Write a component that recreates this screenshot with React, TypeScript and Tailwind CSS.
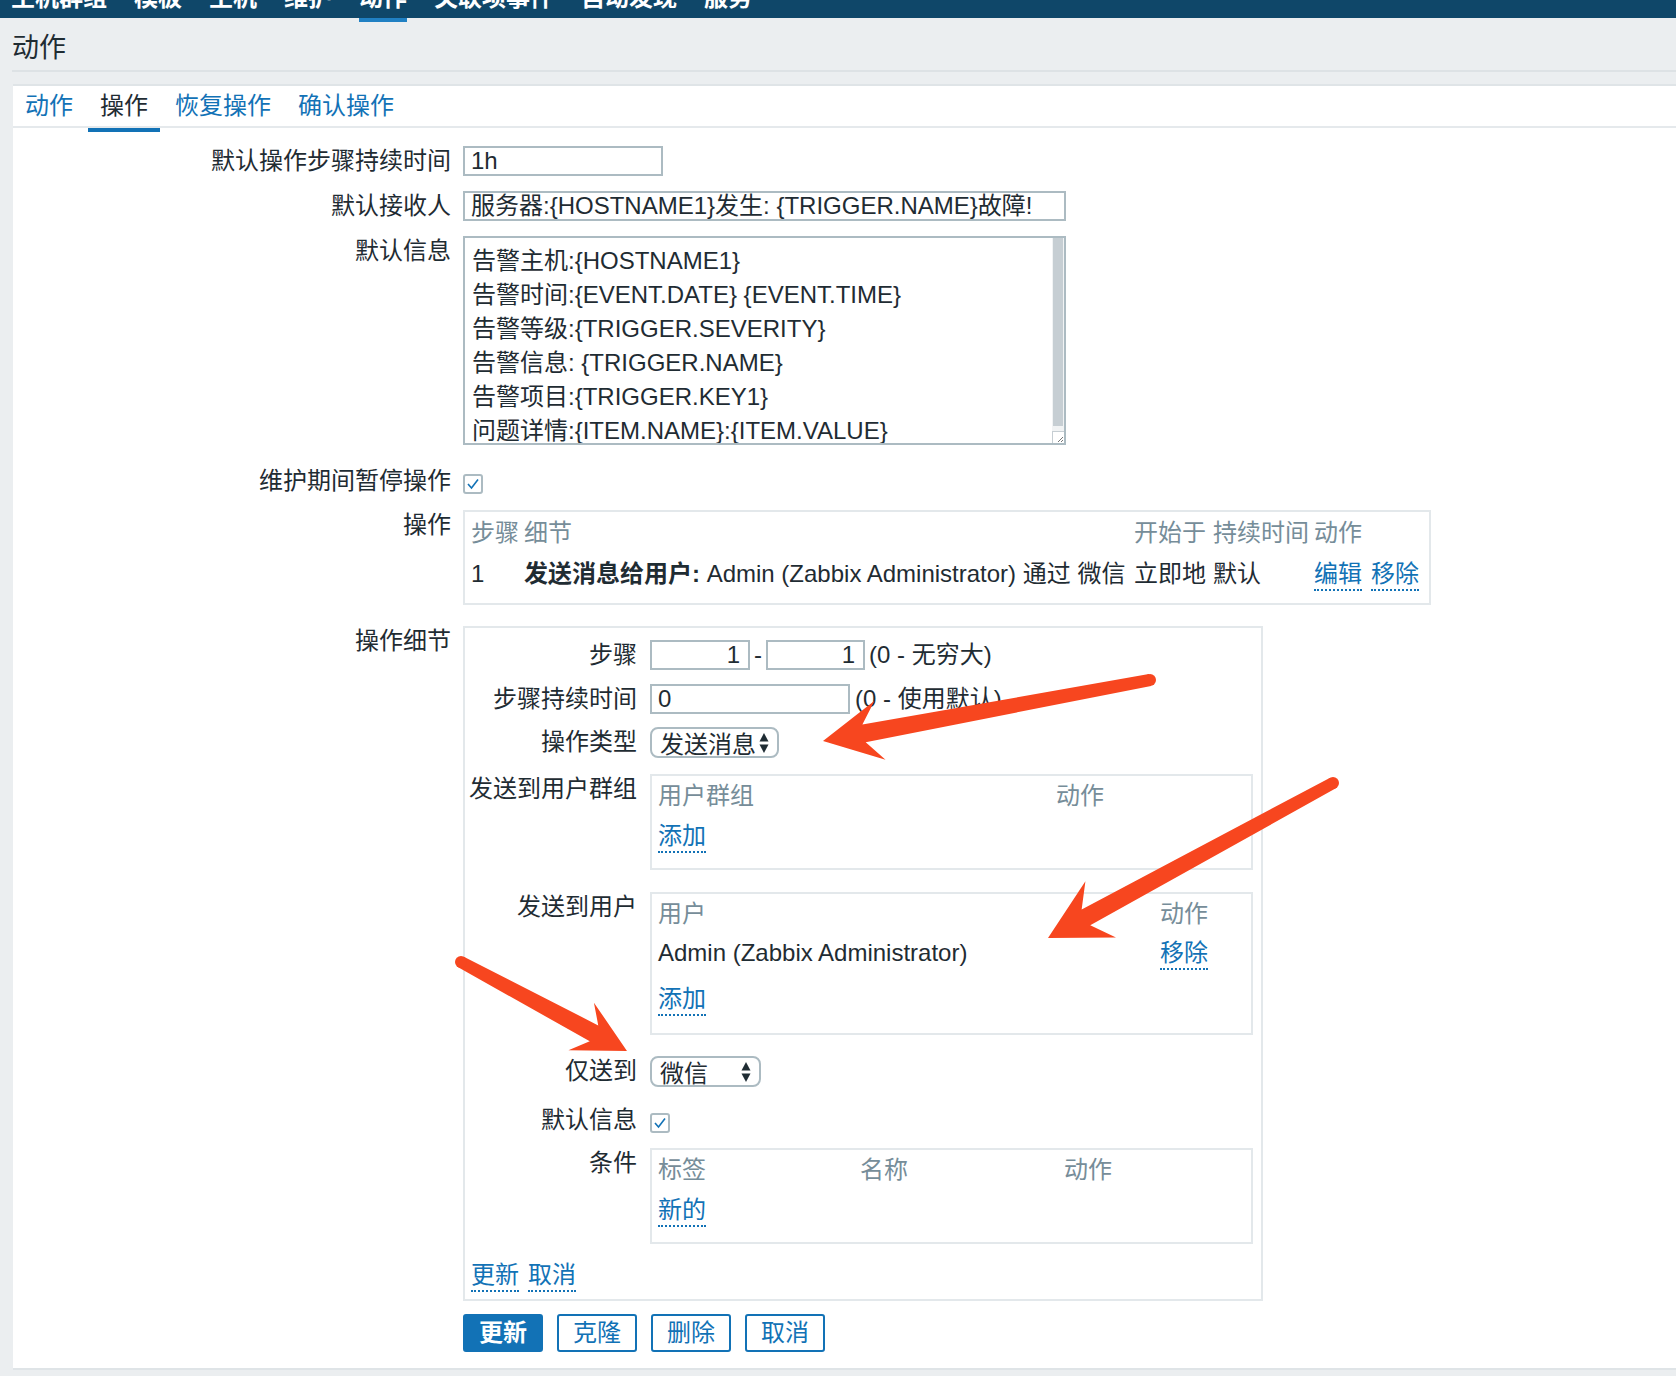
import React from 'react';

const LINK = 'inline-block leading-[30px] text-[#1272b6] border-b-2 border-dotted border-[#1272b6]';
const HEAD = 'text-[#768d99]';

function Arrow({ t, p, head, half }: { t: [number, number]; p: [number, number]; head: number; half: number }) {
  const dx = p[0] - t[0];
  const dy = p[1] - t[1];
  const len = Math.sqrt(dx * dx + dy * dy);
  const ux = dx / len;
  const uy = dy / len;
  const nx = -uy;
  const ny = ux;
  const tailW = 6;
  const neckW = 9;
  const bx = p[0] - ux * head;
  const by = p[1] - uy * head;
  const kx = p[0] - ux * head * 0.72;
  const ky = p[1] - uy * head * 0.72;
  const pts = [
    [t[0] + nx * tailW, t[1] + ny * tailW],
    [kx + nx * neckW, ky + ny * neckW],
    [bx + nx * half, by + ny * half],
    [p[0], p[1]],
    [bx - nx * half, by - ny * half],
    [kx - nx * neckW, ky - ny * neckW],
    [t[0] - nx * tailW, t[1] - ny * tailW],
  ]
    .map((q) => q.join(','))
    .join(' ');
  return (
    <g fill="#f7461f">
      <polygon points={pts} />
      <circle cx={t[0]} cy={t[1]} r={tailW} />
    </g>
  );
}

function Checkbox() {
  return (
    <div className="w-[20px] h-[20px] border-2 border-[#acbbc2] rounded-[3px] bg-white flex items-center justify-center">
      <svg width="14" height="12" viewBox="0 0 14 12">
        <polyline points="2,6 5.5,10 12,1.5" fill="none" stroke="#1272b6" strokeWidth="1.6" />
      </svg>
    </div>
  );
}

function UpDown() {
  return (
    <svg width="10" height="22" viewBox="0 0 10 22">
      <polygon points="5,1 9.5,9.5 0.5,9.5" fill="#1f2c33" />
      <polygon points="0.5,12.5 9.5,12.5 5,21" fill="#1f2c33" />
    </svg>
  );
}

function Select({ value, w }: { value: string; w: string }) {
  return (
    <div className={cn('h-[31px] border-2 border-[#acbbc2] rounded-[8px] bg-white flex items-center justify-between pl-[8px] pr-[8px]', w)}>
      <span className="leading-[27px] pt-[4px]">{value}</span>
      <UpDown />
    </div>
  );
}

function Box({ className, children }: { className?: string; children: React.ReactNode }) {
  return <div className={cn('border-2 border-[#e3e8eb] bg-white', className)}>{children}</div>;
}

export default function App() {
  const nav = ['主机群组', '模板', '主机', '维护', '动作', '关联项事件', '自动发现', '服务'];
  const msg = [
    '告警主机:{HOSTNAME1}',
    '告警时间:{EVENT.DATE} {EVENT.TIME}',
    '告警等级:{TRIGGER.SEVERITY}',
    '告警信息: {TRIGGER.NAME}',
    '告警项目:{TRIGGER.KEY1}',
    '问题详情:{ITEM.NAME}:{ITEM.VALUE}',
  ];

  return (
    <div className="relative w-[1676px] h-[1376px] overflow-hidden bg-[#ebeef0] text-[24px] leading-[30px] text-[#1f2c33] font-['Liberation_Sans','Noto_Sans_CJK_SC',sans-serif]">
      {/* top nav, mostly scrolled off */}
      <div className="h-[18px] bg-[#0f4769] flex gap-[27px] pl-[11px]">
        {nav.map((n) => (
          <div key={n} className="relative h-[18px]">
            <div className="-mt-[14px] leading-[24px] font-bold text-white whitespace-nowrap">{n}</div>
            {n === '动作' && <div className="absolute left-0 right-0 top-full h-[4px] bg-[#2080c3]" />}
          </div>
        ))}
      </div>

      {/* page title */}
      <div className="h-[52px] pl-[12px]">
        <h1 className="pt-[17px] leading-[26px] text-[27px]">动作</h1>
      </div>
      <div className="ml-[12px] h-[2px] bg-[#dde2e5]" />

      {/* form panel */}
      <div className="mt-[12px] ml-[13px] bg-white border-t-2 border-b-2 border-[#dfe4e7] pb-[16px]">
        {/* tabs */}
        <div className="h-[42px] border-b-2 border-[#e5e9ec] flex items-start gap-[3px]">
          {['动作', '操作', '恢复操作', '确认操作'].map((t) => (
            <div
              key={t}
              className={cn(
                'h-[46px] px-[12px] leading-[40px] border-b-4',
                t === '操作' ? 'border-[#1272b6] text-[#1f2c33]' : 'border-transparent text-[#1272b6]'
              )}
            >
              {t}
            </div>
          ))}
        </div>

        {/* default duration */}
        <div className="mt-[18px] flex gap-[12px]">
          <div className="w-[438px] text-right">默认操作步骤持续时间</div>
          <div className="w-[200px] h-[30px] border-2 border-[#acbbc2] pl-[6px] leading-[26px]">1h</div>
        </div>

        <div className="mt-[15px] flex gap-[12px]">
          <div className="w-[438px] text-right">默认接收人</div>
          <div className="w-[603px] h-[30px] border-2 border-[#acbbc2] pl-[6px] leading-[26px] whitespace-nowrap overflow-hidden">
            服务器:{'{HOSTNAME1}'}发生: {'{TRIGGER.NAME}'}故障!
          </div>
        </div>

        <div className="mt-[15px] flex gap-[12px]">
          <div className="w-[438px] text-right">默认信息</div>
          <div className="w-[603px] h-[209px] border-2 border-[#acbbc2] flex overflow-hidden">
            <div className="flex-1 pl-[7px] pt-[6px] leading-[34px] whitespace-nowrap">
              {msg.map((m) => (
                <div key={m}>{m}</div>
              ))}
            </div>
            <div className="w-[12px] flex flex-col bg-[#f1f3f4]">
              <div className="h-[188px] mx-[1px] bg-[#c6ced3]" />
              <div className="flex-1" />
              <div className="h-[12px] border-t border-l border-[#c6ced3] bg-white flex items-end justify-end">
                <svg width="8" height="8" viewBox="0 0 8 8">
                  <line x1="7" y1="2" x2="2" y2="7" stroke="#777" strokeWidth="1" />
                  <line x1="7" y1="5" x2="5" y2="7" stroke="#777" strokeWidth="1" />
                </svg>
              </div>
            </div>
          </div>
        </div>

        <div className="mt-[21px] flex gap-[12px]">
          <div className="w-[438px] text-right">维护期间暂停操作</div>
          <div className="pt-[8px]">
            <Checkbox />
          </div>
        </div>

        {/* operations table */}
        <div className="mt-[14px] flex gap-[12px]">
          <div className="w-[438px] text-right">操作</div>
          <Box className="w-[968px] h-[95px] pl-[6px] pt-[6px]">
            <div className="grid grid-cols-[53px_610px_79px_101px_1fr] whitespace-nowrap">
              <div className={HEAD}>步骤</div>
              <div className={HEAD}>细节</div>
              <div className={HEAD}>开始于</div>
              <div className={HEAD}>持续时间</div>
              <div className={HEAD}>动作</div>
            </div>
            <div className="mt-[11px] grid grid-cols-[53px_610px_79px_101px_1fr] whitespace-nowrap">
              <div>1</div>
              <div>
                <span className="font-bold">发送消息给用户: </span>Admin (Zabbix Administrator) 通过 微信
              </div>
              <div>立即地</div>
              <div>默认</div>
              <div className="flex gap-[9px]">
                <span className={LINK}>编辑</span>
                <span className={LINK}>移除</span>
              </div>
            </div>
          </Box>
        </div>

        {/* operation details */}
        <div className="mt-[21px] flex gap-[12px]">
          <div className="w-[438px] text-right">操作细节</div>
          <Box className="w-[800px] pt-[12px] pb-[7px]">
            <div className="flex gap-[13px]">
              <div className="w-[172px] text-right">步骤</div>
              <div className="flex items-center gap-[4px] whitespace-nowrap">
                <div className="w-[100px] h-[30px] border-2 border-[#acbbc2] pr-[8px] text-right leading-[26px]">1</div>
                <span>-</span>
                <div className="w-[99px] h-[30px] border-2 border-[#acbbc2] pr-[8px] text-right leading-[26px]">1</div>
                <span>(0 - 无穷大)</span>
              </div>
            </div>

            <div className="mt-[14px] flex gap-[13px]">
              <div className="w-[172px] text-right">步骤持续时间</div>
              <div className="flex items-center gap-[5px] whitespace-nowrap">
                <div className="w-[200px] h-[30px] border-2 border-[#acbbc2] pl-[6px] leading-[26px]">0</div>
                <span>(0 - 使用默认)</span>
              </div>
            </div>

            <div className="mt-[13px] flex gap-[13px]">
              <div className="w-[172px] text-right">操作类型</div>
              <Select value="发送消息" w="w-[129px]" />
            </div>

            <div className="mt-[16px] flex gap-[13px]">
              <div className="w-[172px] text-right whitespace-nowrap">发送到用户群组</div>
              <Box className="w-[603px] h-[96px] pl-[6px] pt-[5px]">
                <div className="grid grid-cols-[398px_1fr]">
                  <div className={HEAD}>用户群组</div>
                  <div className={HEAD}>动作</div>
                </div>
                <div className="mt-[10px]">
                  <span className={LINK}>添加</span>
                </div>
              </Box>
            </div>

            <div className="mt-[22px] flex gap-[13px]">
              <div className="w-[172px] text-right">发送到用户</div>
              <Box className="w-[603px] h-[143px] pl-[6px] pt-[5px]">
                <div className="grid grid-cols-[502px_1fr]">
                  <div className={HEAD}>用户</div>
                  <div className={HEAD}>动作</div>
                </div>
                <div className="mt-[9px] grid grid-cols-[502px_1fr] whitespace-nowrap">
                  <div>Admin (Zabbix Administrator)</div>
                  <div>
                    <span className={LINK}>移除</span>
                  </div>
                </div>
                <div className="mt-[14px]">
                  <span className={LINK}>添加</span>
                </div>
              </Box>
            </div>

            <div className="mt-[21px] flex gap-[13px]">
              <div className="w-[172px] text-right">仅送到</div>
              <Select value="微信" w="w-[111px]" />
            </div>

            <div className="mt-[18px] flex gap-[13px]">
              <div className="w-[172px] text-right">默认信息</div>
              <div className="pt-[8px]">
                <Checkbox />
              </div>
            </div>

            <div className="mt-[13px] flex gap-[13px]">
              <div className="w-[172px] text-right">条件</div>
              <Box className="w-[603px] h-[96px] pl-[6px] pt-[5px]">
                <div className="grid grid-cols-[202px_204px_1fr]">
                  <div className={HEAD}>标签</div>
                  <div className={HEAD}>名称</div>
                  <div className={HEAD}>动作</div>
                </div>
                <div className="mt-[10px]">
                  <span className={LINK}>新的</span>
                </div>
              </Box>
            </div>

            <div className="mt-[16px] pl-[6px] flex gap-[9px]">
              <span className={LINK}>更新</span>
              <span className={LINK}>取消</span>
            </div>
          </Box>
        </div>

        {/* buttons */}
        <div className="mt-[13px] ml-[450px] flex gap-[14px]">
          <button className="w-[80px] h-[38px] rounded-[3px] bg-[#1272b6] border-2 border-[#1272b6] text-white font-bold">更新</button>
          <button className="w-[80px] h-[38px] rounded-[3px] bg-white border-2 border-[#1272b6] text-[#1272b6]">克隆</button>
          <button className="w-[80px] h-[38px] rounded-[3px] bg-white border-2 border-[#1272b6] text-[#1272b6]">删除</button>
          <button className="w-[80px] h-[38px] rounded-[3px] bg-white border-2 border-[#1272b6] text-[#1272b6]">取消</button>
        </div>
      </div>

      {/* red annotation arrows drawn over the screenshot */}
      <svg className="absolute inset-0 pointer-events-none" width="1676" height="1376" viewBox="0 0 1676 1376">
        <Arrow t={[1150, 680]} p={[823, 741]} head={58} half={30} />
        <Arrow t={[1333, 783]} p={[1048, 938]} head={60} half={32} />
        <Arrow t={[461, 962]} p={[627, 1051]} head={52} half={27} />
      </svg>
    </div>
  );
}

function cn(...inputs: any[]) {
  return inputs.filter(Boolean).join(' ');
}
